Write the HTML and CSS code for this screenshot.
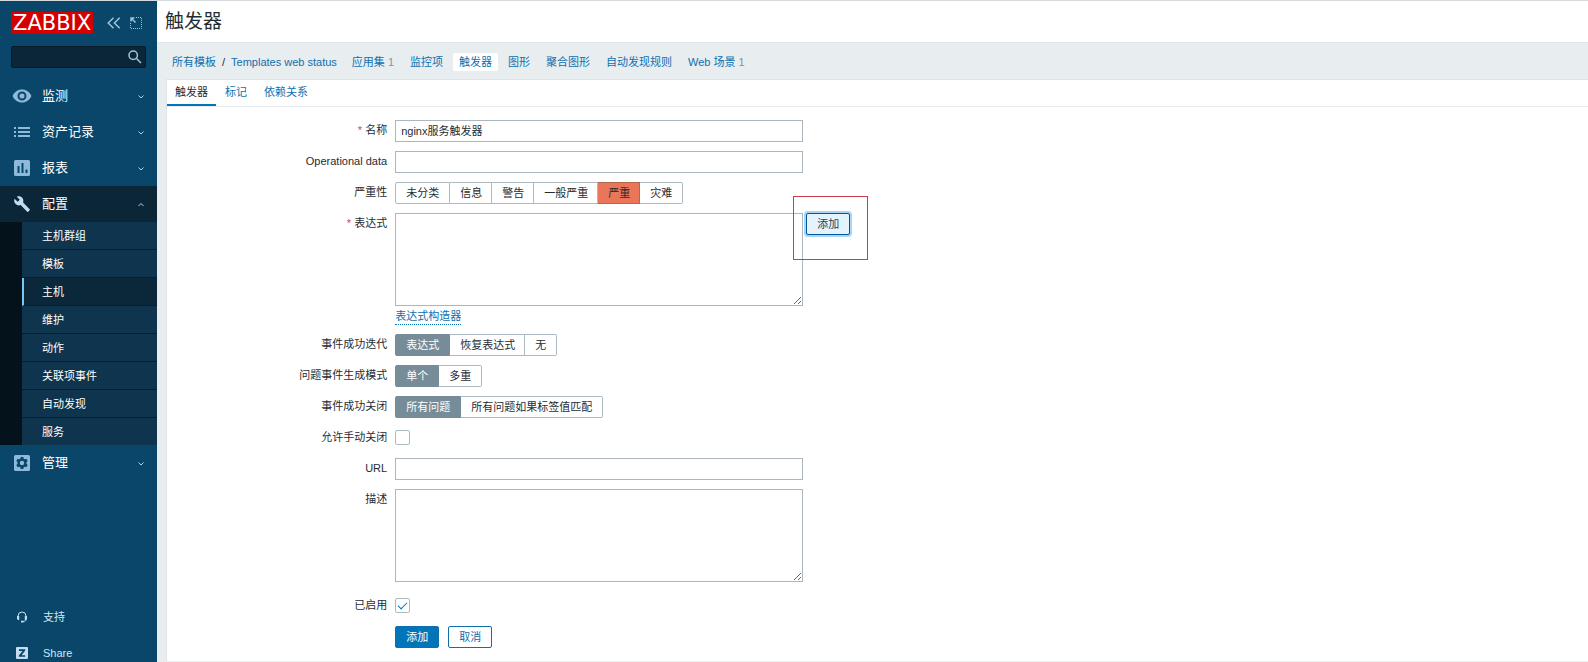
FILE: index.html
```html
<!DOCTYPE html>
<html lang="zh-CN">
<head>
<meta charset="utf-8">
<title>触发器</title>
<link rel="stylesheet" href="styles.css">
</head>
<body>
<aside class="sidebar">
  <div class="brand">
    <a class="logo" href="#">ZABBIX</a>
    <button class="icon-btn" type="button" aria-label="Collapse sidebar">
      <svg width="14" height="12" viewBox="0 0 14 12"><path d="M6.500 .8 1.200 6l5.300 5.200M12.700.8 7.400 6l5.300 5.200"/></svg>
    </button>
    <button class="icon-btn" type="button" aria-label="Hide sidebar">
      <svg width="12" height="12" viewBox="0 0 12 12"><path class="dots" d="M6 .5h5.500v11H.5V6"/><path d="M1 4.500V1h3.500M1 1l4.500 4.500"/></svg>
    </button>
  </div>
  <form class="search">
    <input class="search-input" type="text" aria-label="Search">
    <button class="search-btn" type="button" aria-label="Search">
      <svg width="14" height="14" viewBox="0 0 14 14"><circle cx="5.200" cy="5.200" r="4.200"/><path d="m8.500 8.500 4.500 4.500"/></svg>
    </button>
  </form>
  <nav class="menu">
    <a class="menu-item" href="#">
      <svg class="menu-icon" viewBox="0 0 20 20"><path fill-rule="evenodd" d="M10 3.500C5.800 3.500 2.200 6 .6 10c1.600 4 5.200 6.500 9.400 6.500s7.800-2.500 9.400-6.500C17.800 6 14.200 3.500 10 3.500zm0 11a4.500 4.500 0 1 1 0-9 4.500 4.500 0 0 1 0 9zm0-2a2.500 2.500 0 1 0 0-5 2.500 2.500 0 0 0 0 5z"/></svg>
      <span class="menu-text">监测</span><svg class="chevron" viewBox="0 0 6 6"><path d="m.5 2.500 2.500 2.500 2.500-2.500"/></svg>
    </a>
    <a class="menu-item" href="#">
      <svg class="menu-icon" viewBox="0 0 20 20"><path d="M2 5h2v2H2zM6 5h12v2H6zM2 9h2v2H2zM6 9h12v2H6zM2 13h2v2H2zM6 13h12v2H6z"/></svg>
      <span class="menu-text">资产记录</span><svg class="chevron" viewBox="0 0 6 6"><path d="m.5 2.500 2.500 2.500 2.500-2.500"/></svg>
    </a>
    <a class="menu-item" href="#">
      <svg class="menu-icon" viewBox="0 0 20 20"><path fill-rule="evenodd" d="M3.500 2h13A1.500 1.500 0 0 1 18 3.500v13a1.500 1.500 0 0 1-1.500 1.500h-13A1.500 1.500 0 0 1 2 16.500v-13A1.500 1.500 0 0 1 3.500 2zM5.500 8v7h2V8zm4-3v10h2V5zm4 6.500V15h2v-3.500z"/></svg>
      <span class="menu-text">报表</span><svg class="chevron" viewBox="0 0 6 6"><path d="m.5 2.500 2.500 2.500 2.500-2.500"/></svg>
    </a>
    <a class="menu-item menu-item-open" href="#">
      <svg class="menu-icon" viewBox="0 0 20 20"><path d="m17.700 15.200-6.600-6.600c.6-1.700.3-3.600-1.100-5C8.600 2.200 6.500 1.900 4.800 2.700l3 3-2.100 2.100-3.100-3c-.8 1.700-.4 3.800 1 5.200 1.400 1.400 3.300 1.700 5 1.100l6.600 6.600c.3.3.7.3 1 0l1.600-1.600c.3-.2.3-.7-.1-.9z"/></svg>
      <span class="menu-text">配置</span><svg class="chevron" viewBox="0 0 6 6"><path d="m.5 5 2.500-2.500L5.500 5"/></svg>
    </a>
    <div class="submenu">
      <a class="submenu-item" href="#">主机群组</a>
      <a class="submenu-item" href="#">模板</a>
      <a class="submenu-item submenu-item-current" href="#">主机</a>
      <a class="submenu-item" href="#">维护</a>
      <a class="submenu-item" href="#">动作</a>
      <a class="submenu-item" href="#">关联项事件</a>
      <a class="submenu-item" href="#">自动发现</a>
      <a class="submenu-item" href="#">服务</a>
    </div>
    <a class="menu-item" href="#">
      <svg class="menu-icon" viewBox="0 0 20 20"><path fill-rule="evenodd" d="M3.500 2h13A1.500 1.500 0 0 1 18 3.500v13a1.500 1.500 0 0 1-1.500 1.500h-13A1.500 1.500 0 0 1 2 16.500v-13A1.500 1.500 0 0 1 3.500 2zm5.200 2-.4 1.700-1 .6-1.700-.5-1.300 2.300L5.500 9.300v1.400l-1.200 1.200 1.300 2.300 1.700-.5 1 .6.400 1.700h2.600l.4-1.700 1-.6 1.700.5 1.300-2.300-1.200-1.200V9.300l1.200-1.200-1.300-2.300-1.700.5-1-.6-.4-1.700zM10 7.800a2.200 2.200 0 1 1 0 4.400 2.200 2.200 0 0 1 0-4.400z"/></svg>
      <span class="menu-text">管理</span><svg class="chevron" viewBox="0 0 6 6"><path d="m.5 2.500 2.500 2.500 2.500-2.500"/></svg>
    </a>
  </nav>
  <nav class="support">
    <a class="support-item" href="#">
      <svg class="support-icon" viewBox="0 0 12 12"><path class="line" d="M2 6.500V5a4 4 0 0 1 8 0v3.500c0 1.200-1 2-3.500 2"/><path d="M1 5h2.200v4H2.500A1.500 1.500 0 0 1 1 7.500zM8.800 5H11v2.500A1.500 1.500 0 0 1 9.500 9h-.7zM5 9.700h2.500v1.800H5z"/></svg>
      <span>支持</span>
    </a>
    <a class="support-item" href="#">
      <svg class="support-icon" viewBox="0 0 12 12"><path fill-rule="evenodd" d="M1 0h10a1 1 0 0 1 1 1v10a1 1 0 0 1-1 1H1a1 1 0 0 1-1-1V1a1 1 0 0 1 1-1zm2 2.300v1.600h3.500L2.800 8.600v1.200h6.400V8.200H5.600l3.600-4.600V2.300z"/></svg>
      <span>Share</span>
    </a>
  </nav>
</aside>
<div class="page">
  <header class="header"><h1 class="title">触发器</h1></header>
  <nav class="crumbs">
    <div class="path"><a href="#">所有模板</a><span>/</span><a href="#">Templates web status</a></div>
    <span class="crumb"><a href="#">应用集</a> <span class="count">1</span></span>
    <span class="crumb"><a href="#">监控项</a></span>
    <span class="crumb crumb-current"><a href="#">触发器</a></span>
    <span class="crumb"><a href="#">图形</a></span>
    <span class="crumb"><a href="#">聚合图形</a></span>
    <span class="crumb"><a href="#">自动发现规则</a></span>
    <span class="crumb"><a href="#">Web 场景</a> <span class="count">1</span></span>
  </nav>
  <main class="panel">
    <nav class="tabs">
      <a class="tab tab-current" href="#">触发器</a>
      <a class="tab" href="#">标记</a>
      <a class="tab" href="#">依赖关系</a>
    </nav>
    <form class="form">
      <div class="row">
        <label class="label required" for="name">名称</label>
        <input class="text" id="name" type="text" value="nginx服务触发器">
      </div>
      <div class="row">
        <label class="label" for="opdata">Operational data</label>
        <input class="text" id="opdata" type="text">
      </div>
      <div class="row">
        <span class="label" id="severity">严重性</span>
        <div class="segments" role="radiogroup" aria-labelledby="severity">
          <label class="segment"><input type="radio" name="severity">未分类</label>
          <label class="segment"><input type="radio" name="severity">信息</label>
          <label class="segment"><input type="radio" name="severity">警告</label>
          <label class="segment"><input type="radio" name="severity">一般严重</label>
          <label class="segment segment-high"><input type="radio" name="severity" checked>严重</label>
          <label class="segment"><input type="radio" name="severity">灾难</label>
        </div>
      </div>
      <div class="row">
        <label class="label required" for="expression">表达式</label>
        <div class="expression">
          <textarea class="text area" id="expression"></textarea>
          <div class="marked"><button class="btn btn-focus" type="button">添加</button></div>
          <a class="constructor" href="#">表达式构造器</a>
        </div>
      </div>
      <div class="row">
        <span class="label" id="recovery">事件成功迭代</span>
        <div class="segments" role="radiogroup" aria-labelledby="recovery">
          <label class="segment"><input type="radio" name="recovery" checked>表达式</label>
          <label class="segment"><input type="radio" name="recovery">恢复表达式</label>
          <label class="segment"><input type="radio" name="recovery">无</label>
        </div>
      </div>
      <div class="row">
        <span class="label" id="mode">问题事件生成模式</span>
        <div class="segments" role="radiogroup" aria-labelledby="mode">
          <label class="segment"><input type="radio" name="mode" checked>单个</label>
          <label class="segment"><input type="radio" name="mode">多重</label>
        </div>
      </div>
      <div class="row">
        <span class="label" id="closes">事件成功关闭</span>
        <div class="segments" role="radiogroup" aria-labelledby="closes">
          <label class="segment"><input type="radio" name="closes" checked>所有问题</label>
          <label class="segment"><input type="radio" name="closes">所有问题如果标签值匹配</label>
        </div>
      </div>
      <div class="row">
        <label class="label" for="manual">允许手动关闭</label>
        <input class="check" id="manual" type="checkbox">
      </div>
      <div class="row">
        <label class="label" for="url">URL</label>
        <input class="text" id="url" type="text">
      </div>
      <div class="row row-description">
        <label class="label" for="description">描述</label>
        <textarea class="text area" id="description"></textarea>
      </div>
      <div class="row">
        <label class="label" for="enabled">已启用</label>
        <input class="check" id="enabled" type="checkbox" checked>
      </div>
      <div class="row">
        <div class="actions">
          <button class="btn btn-primary" type="button">添加</button>
          <button class="btn" type="button">取消</button>
        </div>
      </div>
    </form>
  </main>
</div>
</body>
</html>
```
FILE: styles.css
```css
* { box-sizing: border-box; }

body {
  margin: 0;
  min-height: 100vh;
  display: flex;
  border-top: 1px solid #d5dadd;
  background: #e8edf0;
  color: #1f2c33;
  font: 11px/16px "Liberation Sans", "Noto Sans CJK SC", sans-serif;
}

a { color: #0f6fae; text-decoration: none; }
input, textarea, button { font: inherit; color: inherit; margin: 0; }

/* Sidebar */
.sidebar {
  flex: none;
  width: 157px;
  display: flex;
  flex-direction: column;
  background: #0a466a;
}
.brand {
  display: flex;
  align-items: center;
  gap: 9px;
  padding: 11px 11px 0;
}
.logo {
  padding: 0 2px;
  margin-right: 5px;
  background: #d40000;
  color: #fff;
  font: 21px/22px "DejaVu Sans", sans-serif;
}
.icon-btn, .search-btn {
  display: flex;
  padding: 0;
  border: 0;
  background: none;
}
.icon-btn svg, .search-btn svg { fill: none; stroke: #9fc3dc; stroke-width: 1.5; }
.icon-btn .dots { stroke-width: 1; stroke-dasharray: 1 1; }
.search {
  display: flex;
  align-items: center;
  height: 22px;
  margin: 12px 11px 10px;
  padding-right: 3px;
  border: 1px solid #061a26;
  border-radius: 2px;
  background: #0a2637;
}
.search-input {
  flex: 1;
  min-width: 0;
  border: 0;
  background: none;
  color: #fff;
}
.menu-item {
  display: flex;
  align-items: center;
  height: 36px;
  padding: 0 13px 0 12px;
  color: #fff;
  font-size: 13px;
}
.menu-icon { width: 20px; height: 20px; margin-right: 10px; fill: #8fb9d8; }
.menu-text { flex: 1; }
.chevron { width: 6px; height: 6px; fill: none; stroke: #b4d2e6; }
.menu-item-open { background: #0a2637; }
.menu-item-open .menu-icon { fill: #c3dcee; }
.submenu {
  padding-left: 22px;
  background: #04121b;
}
.submenu-item {
  display: block;
  padding: 6px 0 5px 20px;
  border-bottom: 1px solid #061f30;
  background: #0f344d;
  color: #fff;
}
.submenu-item:last-child { border-bottom: 0; }
.submenu-item-current {
  padding-left: 18px;
  border-left: 2px solid #7ac6f3;
  background: #0b283b;
}
.support { margin-top: auto; margin-bottom: -9px; }
.support-item {
  display: flex;
  align-items: center;
  gap: 15px;
  height: 36px;
  padding-left: 16px;
  color: #d3e5f1;
}
.support-icon { width: 12px; height: 12px; fill: #c3dcee; }
.support-icon .line { fill: none; stroke: #c3dcee; }

/* Page header */
.page {
  flex: 1;
  min-width: 0;
  display: flex;
  flex-direction: column;
}
.header {
  padding: 0 8px;
  border-bottom: 1px solid #dfe4e7;
  background: #fff;
}
.title { margin: 0; font-size: 19px; font-weight: 400; line-height: 41px; }
.crumbs {
  display: flex;
  align-items: center;
  height: 36px;
  padding: 1px 10px 0;
  gap: 4px;
}
.path { display: flex; gap: 6px; padding: 0 5px; }
.crumb { padding: 1px 6px; border-radius: 2px; }
.crumb-current { background: #fff; }
.count { color: #87929a; }

/* Form panel */
.panel {
  flex: 1;
  margin: 0 0 1px 9px;
  border-left: 1px solid #dfe4e7;
  border-top: 1px solid #dfe4e7;
  background: #fff;
}
.tabs { display: flex; gap: 1px; border-bottom: 1px solid #e6eaec; }
.tab { padding: 4px 8px; border-bottom: 2px solid transparent; }
.tab-current { border-bottom-color: #0275b8; color: #1f2c33; }
.form {
  display: flex;
  flex-direction: column;
  gap: 9px;
  padding: 13px 10px 12px;
}
.row {
  display: grid;
  grid-template-columns: 15% auto;
  justify-content: start;
  align-items: start;
  column-gap: 8px;
  min-height: 22px;
}
.label { padding: 2px 0 4px; text-align: right; }
.required::before { content: "* "; color: #d6414b; }
.text {
  display: block;
  width: 408px;
  height: 22px;
  padding: 0 5px 2px;
  border: 1px solid #acb6bc;
  border-radius: 0;
  background: #fff;
  outline: 0;
}
.area { height: 93px; resize: both; }
.row-description { padding-bottom: 4px; }
.segments { display: flex; }
.segment {
  height: 22px;
  padding: 0 10px;
  border: 1px solid #acbbc2;
  line-height: 20px;
}
.segment + .segment { padding-right: 9px; border-left: 0; }
.segment:first-child { border-radius: 2px 0 0 2px; }
.segment:last-child { padding-right: 10px; border-radius: 0 2px 2px 0; }
.segment input { position: absolute; appearance: none; opacity: 0; }
.segment:has(:checked) { border-color: #768d99; background: #768d99; color: #fff; }
.segment-high:has(:checked) { border-color: #b0684f; background: #e97659; color: #1f2c33; }
.expression {
  display: grid;
  grid-template-columns: auto auto;
  column-gap: 3px;
  align-items: start;
  justify-items: start;
}
.constructor {
  margin-top: 3px;
  border-bottom: 1px dotted #0275b8;
  line-height: 15px;
}
.marked { position: relative; }
.marked::after {
  content: "";
  position: absolute;
  inset: -17px -18px -25px -13px;
  border: 1px solid #cf3d4c;
  pointer-events: none;
}
.check {
  appearance: none;
  width: 15px;
  height: 15px;
  margin-top: 3px;
  border: 1px solid #acbbc2;
  border-radius: 2px;
  background: #fff;
}
.check:checked::before {
  content: "";
  display: block;
  width: 8px;
  height: 4px;
  margin: 3px 2px;
  border: solid #0275b8;
  border-width: 0 0 1px 1px;
  transform: rotate(-45deg);
}
.actions { grid-column: 2; display: flex; gap: 9px; }
.btn {
  display: block;
  height: 22px;
  padding: 0 10px;
  border: 1px solid #0f6fae;
  border-radius: 2px;
  background: #fff;
  color: #0f6fae;
  line-height: 20px;
}
.btn-primary { background: #0275b8; color: #fff; }
.btn-focus {
  border-color: #01579b;
  background: #e5f3fd;
  box-shadow: 0 0 0 2px #a8d6f8;
  color: #1f3d5c;
}
```
